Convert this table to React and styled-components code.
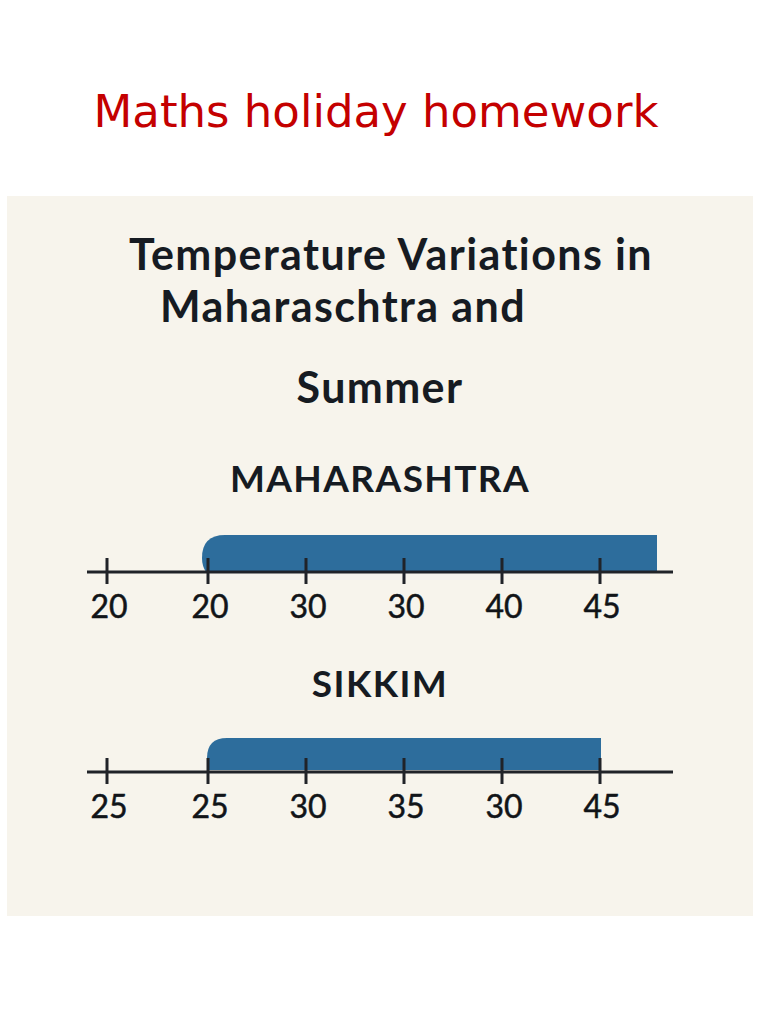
import styled, {createGlobalStyle} from 'styled-components';

const GlobalStyle = createGlobalStyle`
  html, body {
    margin: 0;
    padding: 0;
    background: #ffffff;
  }
  body {
    font-family: 'DejaVu Sans', sans-serif;
  }
`;

const charts = [
  {
    name: 'MAHARASHTRA',
    gap: 20,
    labels: ['20', '20', '30', '30', '40', '45'],
    bar: 'M199,52 Q195,46 195,38 Q195,15 218,15 L650,15 L650,52 Z',
  },
  {
    name: 'SIKKIM',
    gap: 15,
    labels: ['25', '25', '30', '35', '30', '45'],
    bar: 'M200,50 L200,38 Q200,18 220,18 L594,18 L594,50 Z',
  },
];

const ticks = [100, 201, 299, 397, 495, 593];

function NumberLine({bar, labels}) {
  return (
    <Line viewBox="0 0 746 110" width="746" height="110">
      <path d={bar} fill="#2d6d9c" />
      <line x1="80" y1="52" x2="666" y2="52" stroke="#202328" strokeWidth="3" />
      {ticks.map((x, i) => (
        <g key={i}>
          <line x1={x} y1="38" x2={x} y2="64" stroke="#202328" strokeWidth="3" />
          <TickLabel x={x + 2} y="98" textAnchor="middle">
            {labels[i]}
          </TickLabel>
        </g>
      ))}
    </Line>
  );
}

export default function App() {
  return (
    <>
      <GlobalStyle />
      <Page>
        <Header>
          <Heading>Maths holiday homework</Heading>
        </Header>
        <Panel>
          <ChartTitle $shift={22}>Temperature Variations in</ChartTitle>
          <ChartTitle $shift={-74}>Maharaschtra and</ChartTitle>
          <ChartTitle $top={29}>Summer</ChartTitle>
          {charts.map((c, i) => (
            <Section key={c.name} $top={i === 0 ? 43 : 31}>
              <Region $gap={c.gap}>{c.name}</Region>
              <NumberLine bar={c.bar} labels={c.labels} />
            </Section>
          ))}
        </Panel>
      </Page>
    </>
  );
}

const Page = styled.div`
  width: 768px;
  min-height: 1024px;
  background: #ffffff;
`;

const Header = styled.header`
  height: 196px;
  box-sizing: border-box;
  padding: 86px 16px 0 0;
  text-align: center;
`;

const Heading = styled.h1`
  margin: 0;
  font-family: 'DejaVu Sans', sans-serif;
  font-weight: 400;
  font-size: 45px;
  line-height: 52px;
  color: #c40000;
`;

const Panel = styled.section`
  width: 746px;
  margin-left: 7px;
  box-sizing: border-box;
  padding: 32px 0 86px;
  background: #f7f4ec;
  display: flex;
  flex-direction: column;
  align-items: stretch;
`;

const ChartTitle = styled.h2`
  margin: ${({$top}) => $top || 0}px 0 0;
  font-family: Lato, 'Liberation Sans', sans-serif;
  font-weight: 700;
  font-size: 43px;
  letter-spacing: 1.4px;
  line-height: 52px;
  color: #161b22;
  text-align: center;
  padding-left: ${({$shift}) => ($shift > 0 ? $shift : 0)}px;
  padding-right: ${({$shift}) => ($shift < 0 ? -$shift : 0)}px;
`;

const Section = styled.div`
  margin-top: ${({$top}) => $top}px;
  display: flex;
  flex-direction: column;
  align-items: center;
`;

const Region = styled.h3`
  margin: 0 0 ${({$gap}) => $gap}px;
  font-family: Lato, 'Liberation Sans', sans-serif;
  font-weight: 700;
  font-size: 37px;
  line-height: 44px;
  color: #161b22;
  letter-spacing: 1.4px;
`;

const Line = styled.svg`
  display: block;
`;

const TickLabel = styled.text`
  font-family: Lato, 'Liberation Sans', sans-serif;
  font-size: 32px;
  font-weight: 400;
  fill: #111418;
  stroke: #111418;
  stroke-width: 0.5px;
`;
